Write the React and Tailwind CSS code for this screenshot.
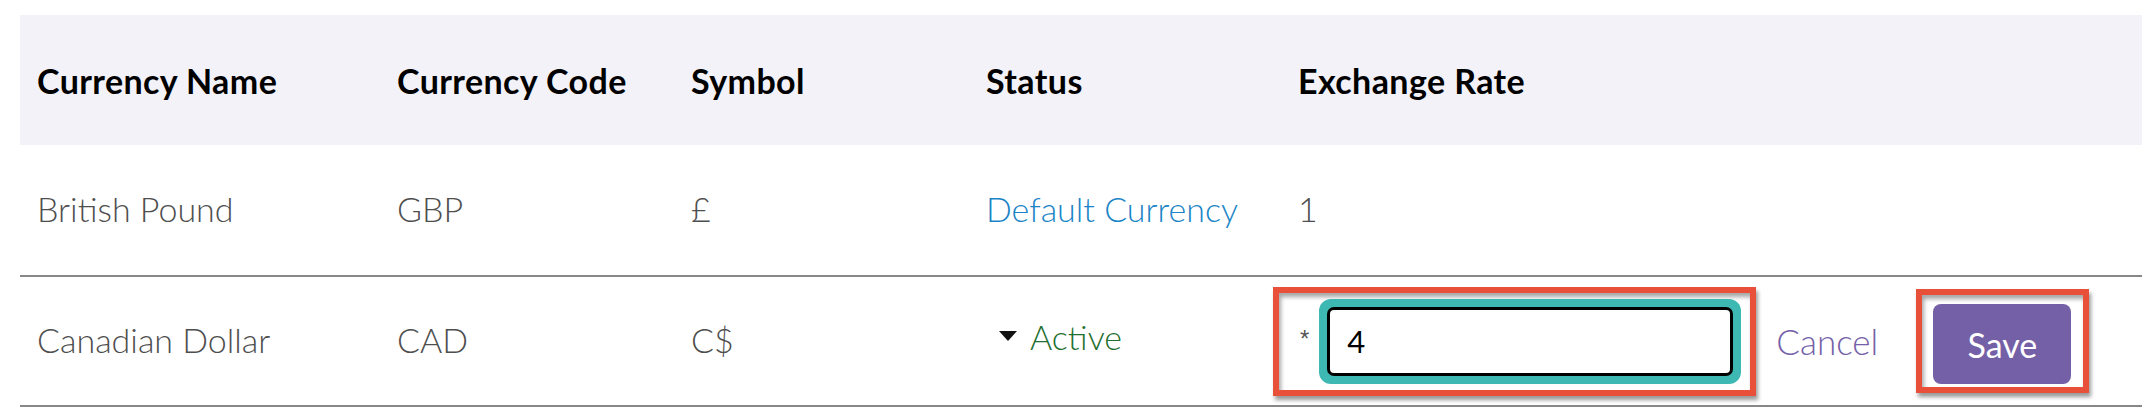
import React, { useState } from "react";

const cols = "grid grid-cols-[360px_294px_295px_312px_1fr]";
const font = { fontFamily: "Lato, 'Liberation Sans', sans-serif" };

function HeadCell({ children }) {
  return <div className="pl-[17px] font-bold text-black text-[34px] tracking-[0.4px]">{children}</div>;
}

function Cell({ children, className = "" }) {
  return <div className={"pl-[17px] text-[#4e4e4e] " + className}>{children}</div>;
}

export default function App() {
  const [rate, setRate] = useState("4");

  return (
    <div className="w-[2154px] h-[412px] bg-white text-[34px] font-light" style={font}>
      <div className="ml-[20px] pt-[15px] w-[2122px]">
        <div className={cols + " h-[130px] items-center bg-[#f2f2f8]"}>
          <HeadCell>Currency Name</HeadCell>
          <HeadCell>Currency Code</HeadCell>
          <HeadCell>Symbol</HeadCell>
          <HeadCell>Status</HeadCell>
          <HeadCell>Exchange Rate</HeadCell>
        </div>

        <div className={cols + " h-[132px] items-center border-b-2 border-[#888888]"}>
          <Cell className="-mt-[4px]">British Pound</Cell>
          <Cell className="-mt-[4px]">GBP</Cell>
          <Cell className="-mt-[4px]">£</Cell>
          <Cell className="-mt-[4px] !text-[#1a84c6]">Default Currency</Cell>
          <Cell className="-mt-[4px]">1</Cell>
        </div>

        <div className={cols + " h-[130px] items-center border-b-2 border-[#888888]"}>
          <Cell className="-mt-[4px]">Canadian Dollar</Cell>
          <Cell className="-mt-[4px]">CAD</Cell>
          <Cell className="-mt-[4px]">C$</Cell>
          <div className="pl-[30px] flex items-center gap-[13px] text-[#1f6f30] -mt-[10px]">
            <svg width="18" height="10" viewBox="0 0 18 10">
              <path d="M0 0 L18 0 L9 10 Z" fill="#111" />
            </svg>
            <span>Active</span>
          </div>
          <div className="flex items-center -ml-[8px]">
            <div className="flex items-center border-[6px] border-[#e8503a] pl-[21px] pr-[9px] py-[6px] shadow-[2px_4px_4px_rgba(0,0,0,0.4),inset_2px_4px_4px_rgba(0,0,0,0.35)]">
              <span
                className="text-[24px] font-normal text-[#555] mr-[10px] -mt-[4px]"
                style={{ fontFamily: "'Liberation Sans', sans-serif" }}
              >
                *
              </span>
              <div className="rounded-[12px] bg-[#3db8b3] p-[8px]">
                <input
                  value={rate}
                  onChange={(e) => setRate(e.target.value)}
                  className="block w-[406px] h-[69px] rounded-[7px] border-[3px] border-black bg-white pl-[17px] text-[31px] font-normal text-black outline-none"
                  style={font}
                />
              </div>
            </div>
            <button className="ml-[20px] w-[107px] text-left whitespace-nowrap text-[#7461a8] bg-transparent text-[35px] font-light" style={font}>
              Cancel
            </button>
            <div className="ml-[33px] border-[6px] border-[#e8503a] pl-[11px] pr-[12px] pt-[9px] pb-[3px] shadow-[2px_4px_4px_rgba(0,0,0,0.4),inset_2px_4px_4px_rgba(0,0,0,0.35)]">
              <button
                className="w-[138px] h-[80px] rounded-[8px] bg-[#7460a6] text-white text-[34px] font-normal"
                style={font}
              >
                Save
              </button>
            </div>
          </div>
        </div>
      </div>
    </div>
  );
}
